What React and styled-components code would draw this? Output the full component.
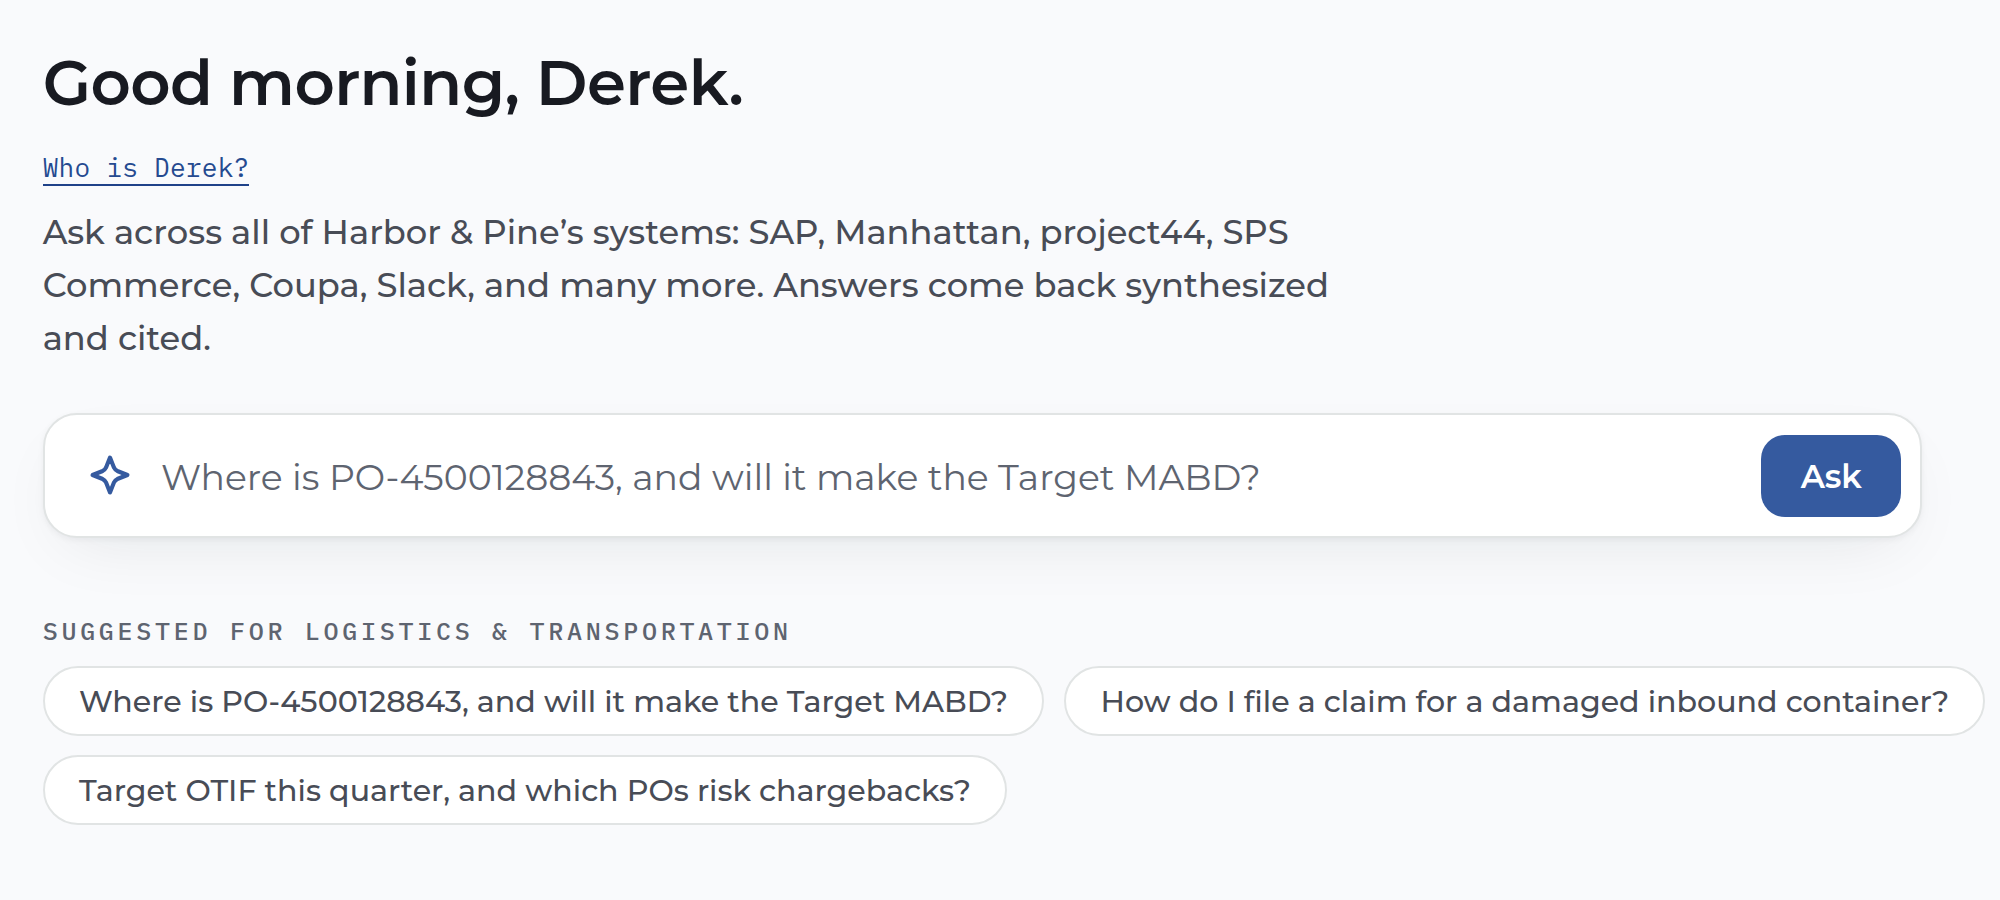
import React from 'react';
import styled, { createGlobalStyle } from 'styled-components';

const SANS = "Montserrat, Inter, 'Open Sans', sans-serif";
const MONO = "'IBM Plex Mono', 'Liberation Mono', monospace";

const SUGGESTIONS = [
  'Where is PO-4500128843, and will it make the Target MABD?',
  'How do I file a claim for a damaged inbound container?',
  'Target OTIF this quarter, and which POs risk chargebacks?'
];

const GlobalStyle = createGlobalStyle`
  * {
    box-sizing: border-box;
  }

  body {
    margin: 0;
    background-color: #f9fafc;
    font-family: ${SANS};
  }
`;

const Page = styled.main`
  min-height: 900px;
  padding: 43px 0 0 42.7px;

  overflow: hidden;
`;

const Title = styled.h1`
  margin: 0;

  font-size: 62.6px;
  font-weight: 600;
  line-height: 80px;
  letter-spacing: -0.6px;
  color: #181a21;
`;

const PersonaLink = styled.a`
  display: block;
  width: max-content;
  height: 37px;
  margin-top: 26px;

  border-bottom: 2px solid #1f4289;

  font-family: ${MONO};
  font-size: 26.1px;
  line-height: 36px;
  letter-spacing: 0.25px;
  color: #254a90;
  text-decoration: none;
`;

const Intro = styled.p`
  width: 1310px;
  margin: 19px 0 0;

  font-size: 33.74px;
  font-weight: 500;
  line-height: 53.2px;
  color: #484c56;
`;

const AskBar = styled.form`
  display: flex;
  align-items: center;
  width: 1879.6px;
  height: 125px;
  margin-top: 48px;
  padding: 0 19px 0 43px;

  border: 2px solid #e1e4e4;
  border-radius: 34px;
  background-color: #fff;
  box-shadow: 0 2px 6px rgba(24, 26, 33, 0.05),
    0 24px 68px -26px rgba(24, 26, 33, 0.1);
`;

const Spark = styled.svg`
  flex: 0 0 auto;

  width: 44px;
  height: 44px;
`;

const AskInput = styled.input`
  flex: 1 1 auto;

  margin: 0 20px 0 29.3px;
  padding: 3px 0 0;

  border: none;
  outline: none;
  background: none;

  font-family: inherit;
  font-size: 36.15px;
  font-weight: 400;

  &::placeholder {
    color: #5e6470;
    opacity: 1;
  }
`;

const AskButton = styled.button`
  width: 140px;
  height: 82px;
  margin-top: 1px;
  padding: 1px 0 0;

  border: none;
  border-radius: 24px;
  background-color: #355a9f;

  font-family: inherit;
  font-size: 32.3px;
  font-weight: 600;
  color: #fff;
`;

const SuggestionsLabel = styled.h2`
  margin: 76px 0 0;

  font-family: ${MONO};
  font-size: 25.1px;
  font-weight: 500;
  line-height: 34px;
  letter-spacing: 3.67px;
  text-transform: uppercase;
  color: #5e6470;
`;

const Suggestions = styled.div`
  display: flex;
  flex-wrap: wrap;
  gap: 19px 20px;
  margin-top: 18px;
`;

const Suggestion = styled.button`
  height: 70px;
  padding: 2px 34.2px 0;

  border: 2px solid #e1e4e4;
  border-radius: 999px;
  background-color: #fff;

  font-family: inherit;
  font-size: 30.1px;
  font-weight: 500;
  color: #484c56;
  white-space: nowrap;
`;

function SparkIcon() {
  return (
    <Spark viewBox="0 0 24 24" fill="none" stroke="#355a9f">
      <path
        d="M12 2.5L14.2 8Q14.8 9.2 16 9.8L21.5 12L16 14.2Q14.8 14.8 14.2 16L12 21.5L9.8 16Q9.2 14.8 8 14.2L2.5 12L8 9.8Q9.2 9.2 9.8 8Z"
        strokeWidth="2.25"
        strokeLinejoin="round"
      />
    </Spark>
  );
}

export default function App() {
  return (
    <Page>
      <GlobalStyle />
      <Title>Good morning, Derek.</Title>
      <PersonaLink href="#derek">Who is Derek?</PersonaLink>
      <Intro>
        Ask across all of Harbor &amp; Pine’s systems: SAP, Manhattan,
        project44, SPS Commerce, Coupa, Slack, and many more. Answers come back
        synthesized and cited.
      </Intro>
      <AskBar>
        <SparkIcon />
        <AskInput placeholder="Where is PO-4500128843, and will it make the Target MABD?" />
        <AskButton type="button">Ask</AskButton>
      </AskBar>
      <SuggestionsLabel>Suggested for Logistics &amp; Transportation</SuggestionsLabel>
      <Suggestions>
        {SUGGESTIONS.map(text => (
          <Suggestion key={text} type="button">
            {text}
          </Suggestion>
        ))}
      </Suggestions>
    </Page>
  );
}
